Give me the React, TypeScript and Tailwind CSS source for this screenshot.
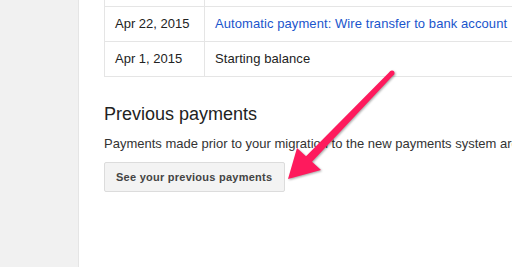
import React from "react"

const rows = [
  { date: "", desc: "", link: false },
  { date: "Apr 22, 2015", desc: "Automatic payment: Wire transfer to bank account", link: true },
  { date: "Apr 1, 2015", desc: "Starting balance", link: false },
]

function Arrow() {
  return (
    <svg
      className="absolute left-0 top-0 pointer-events-none drop-shadow-[1px_1px_1px_rgba(0,0,0,0.35)]"
      width="512"
      height="267"
      viewBox="0 0 512 267"
    >
      <polygon
        fill="#fe1a5d"
        points="390.2,71.3 306,156.3 297,148 288,179 321,170 312,161.7 393.8,74.7"
      />
      <circle cx="392" cy="73" r="2.5" fill="#fe1a5d" />
    </svg>
  )
}

export default function App() {
  return (
    <div className="relative flex h-[267px] w-[512px] overflow-hidden bg-white font-['Liberation_Sans',Arial,sans-serif] text-[13px] leading-[18px] text-[#222]">
      {/* Sidebar */}
      <div className="w-[79px] shrink-0 border-r border-[#e5e5e5] bg-[#f1f1f1]" />

      {/* Main */}
      <div className="flex-1 pl-[25px]">
        <div className="-mt-[28px] w-[600px] border-l border-[#e5e5e5]">
          {rows.map((r, i) => (
            <div key={i} className="flex h-[35px] border-b border-[#e5e5e5]">
              <div className="w-[100px] shrink-0 border-r border-[#e5e5e5] px-[10px] pt-[8px] whitespace-nowrap">
                {r.date}
              </div>
              <div
                className={`flex-1 px-[10px] pt-[8px] whitespace-nowrap tracking-[0.08px] ${r.link ? "text-[#1a55cc]" : ""}`}
              >
                {r.desc}
              </div>
            </div>
          ))}
        </div>

        <h2 className="mt-[25px] text-[18px] leading-[24px] font-normal text-[#222]">Previous payments</h2>
        <p className="mt-[9px] whitespace-nowrap text-[#333]">
          Payments made prior to your migration to the new payments system are available here.
        </p>
        <button className="mt-[9px] h-[30px] w-[181px] rounded-[2px] border border-[#dcdcdc] bg-[#f3f3f3] pl-[11px] pr-[10px] text-left text-[11px] font-bold tracking-[0.25px] text-[#444]">
          See your previous payments
        </button>
      </div>

      <Arrow />
    </div>
  )
}
